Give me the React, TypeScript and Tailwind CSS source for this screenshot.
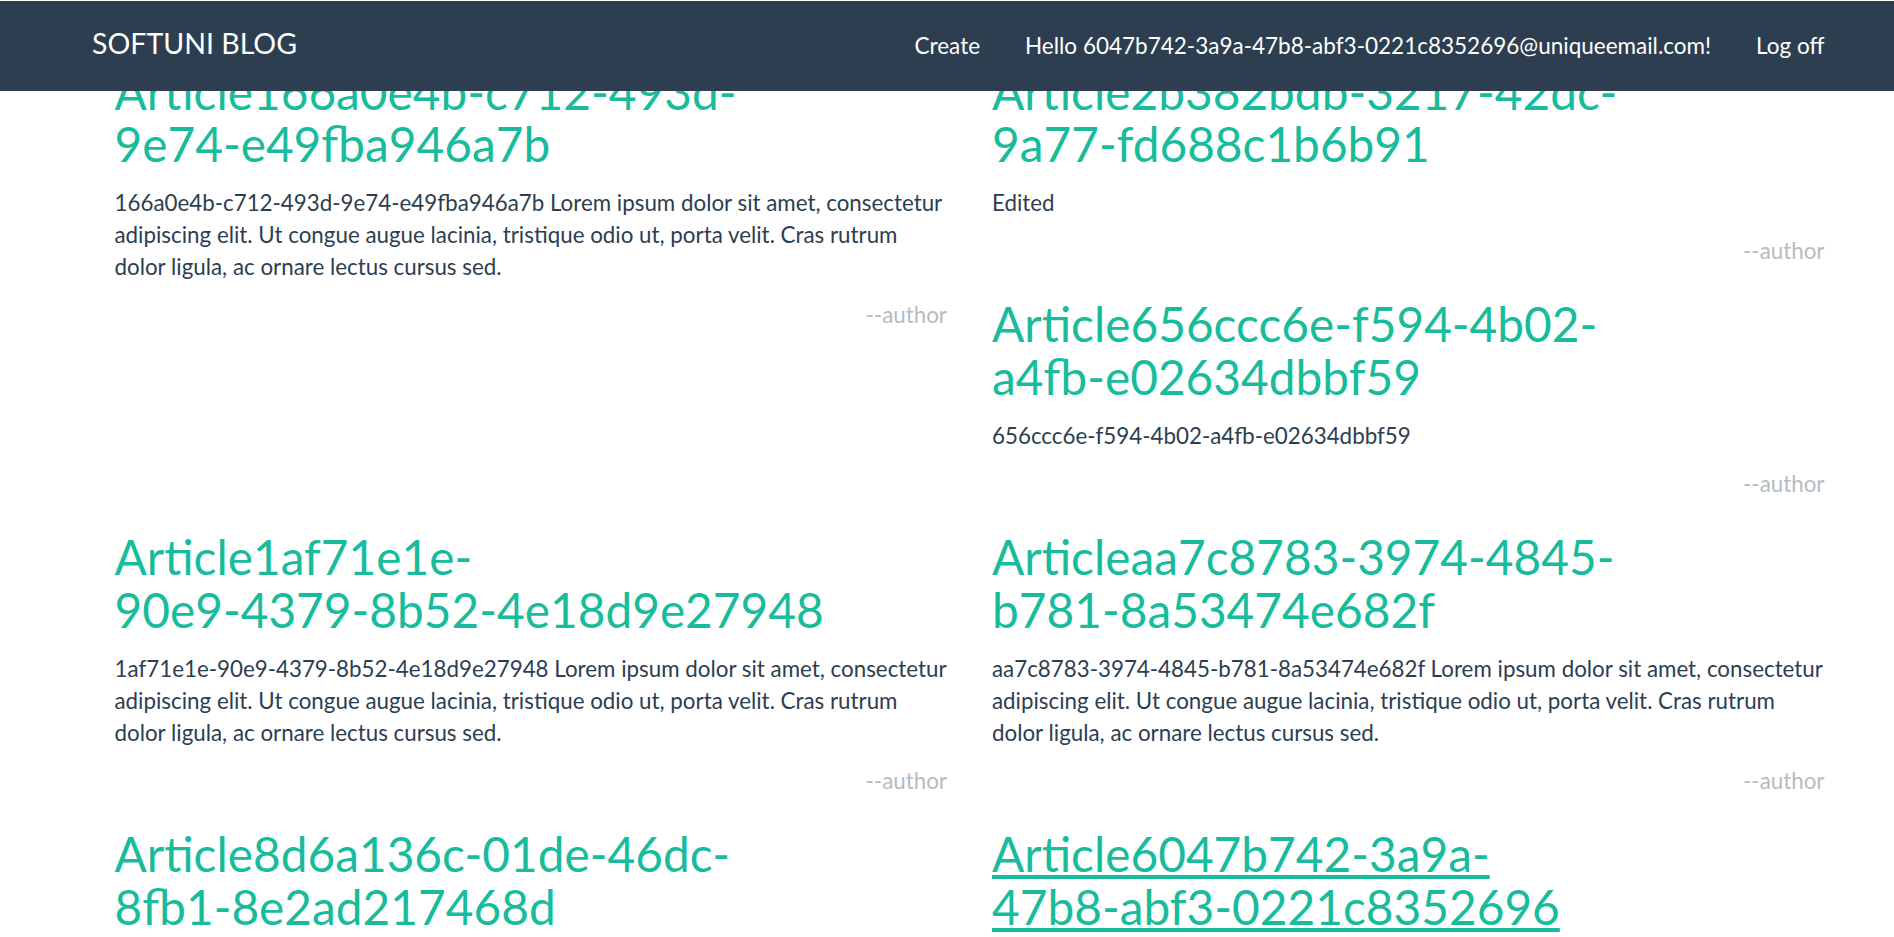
import React from 'react';

interface Article {
  title: string[];
  body: string[];
  active?: boolean;
}

const lorem = (id: string) => [
  `${id} Lorem ipsum dolor sit amet, consectetur`,
  'adipiscing elit. Ut congue augue lacinia, tristique odio ut, porta velit. Cras rutrum',
  'dolor ligula, ac ornare lectus cursus sed.',
];

const articles: Article[] = [
  {
    title: ['Article166a0e4b-c712-493d-', '9e74-e49fba946a7b'],
    body: lorem('166a0e4b-c712-493d-9e74-e49fba946a7b'),
  },
  {
    title: ['Article2b382bdb-3217-42dc-', '9a77-fd688c1b6b91'],
    body: ['Edited'],
  },
  {
    title: ['Article656ccc6e-f594-4b02-', 'a4fb-e02634dbbf59'],
    body: ['656ccc6e-f594-4b02-a4fb-e02634dbbf59'],
  },
  {
    title: ['Article1af71e1e-', '90e9-4379-8b52-4e18d9e27948'],
    body: lorem('1af71e1e-90e9-4379-8b52-4e18d9e27948'),
  },
  {
    title: ['Articleaa7c8783-3974-4845-', 'b781-8a53474e682f'],
    body: lorem('aa7c8783-3974-4845-b781-8a53474e682f'),
  },
  {
    title: ['Article8d6a136c-01de-46dc-', '8fb1-8e2ad217468d'],
    body: lorem('8d6a136c-01de-46dc-8fb1-8e2ad217468d'),
  },
  {
    title: ['Article6047b742-3a9a-', '47b8-abf3-0221c8352696'],
    body: lorem('6047b742-3a9a-47b8-abf3-0221c8352696'),
    active: true,
  },
];

const ArticleCard: React.FC<{ article: Article }> = ({ article }) => (
  <article className="px-[22.5px] pt-[31.5px]">
    <h2 className="mb-[15.75px] text-[47.8px] leading-[52.8px] font-normal">
      <a
        href="#"
        className={`text-[#18bc9c] ${article.active ? 'underline' : 'no-underline'}`}
      >
        {article.title.map((line, i) => (
          <React.Fragment key={i}>
            {i > 0 && <br />}
            {line}
          </React.Fragment>
        ))}
      </a>
    </h2>
    <p className="mb-[15.75px] whitespace-nowrap">
      {article.body.map((line, i) => (
        <React.Fragment key={i}>
          {i > 0 && <br />}
          {line}
        </React.Fragment>
      ))}
    </p>
    <div className="text-right text-[#b4bcc2]">--author</div>
  </article>
);

export default function App() {
  const [a1, a2, a3, a4, a5, a6, a7] = articles;

  return (
    <div className="min-h-screen bg-white font-['Lato',sans-serif] text-[22.35px] leading-[32.14px] text-[#2c3e50]">
      {/* fixed top navbar */}
      <nav className="fixed top-0 left-0 right-0 z-10 h-[91px] border-t border-white bg-[#2c3e50]">
        <div className="mx-auto flex w-[1755px] items-start justify-between">
          <a href="#" className="mt-[28px] pl-[22.5px] text-[28.5px] leading-[28.5px] text-white">
            SOFTUNI BLOG
          </a>
          <ul className="mr-[-22.5px] mt-[34px] flex text-[22.5px] leading-[22.5px] text-white">
            <li className="px-[22.5px]">Create</li>
            <li className="px-[22.5px]">Hello 6047b742-3a9a-47b8-abf3-0221c8352696@uniqueemail.com!</li>
            <li className="px-[22.5px]">Log off</li>
          </ul>
        </div>
      </nav>

      {/* article list (page scrolled a little, so first row sits under the navbar) */}
      <main className="mx-auto w-[1755px] px-[22.5px] pt-[34px]">
        <div className="grid grid-cols-[877.5px_877.5px] items-start">
          <ArticleCard article={a1} />
          <div>
            <ArticleCard article={a2} />
            <ArticleCard article={a3} />
          </div>
          <ArticleCard article={a4} />
          <ArticleCard article={a5} />
          <ArticleCard article={a6} />
          <ArticleCard article={a7} />
        </div>
      </main>
    </div>
  );
}
